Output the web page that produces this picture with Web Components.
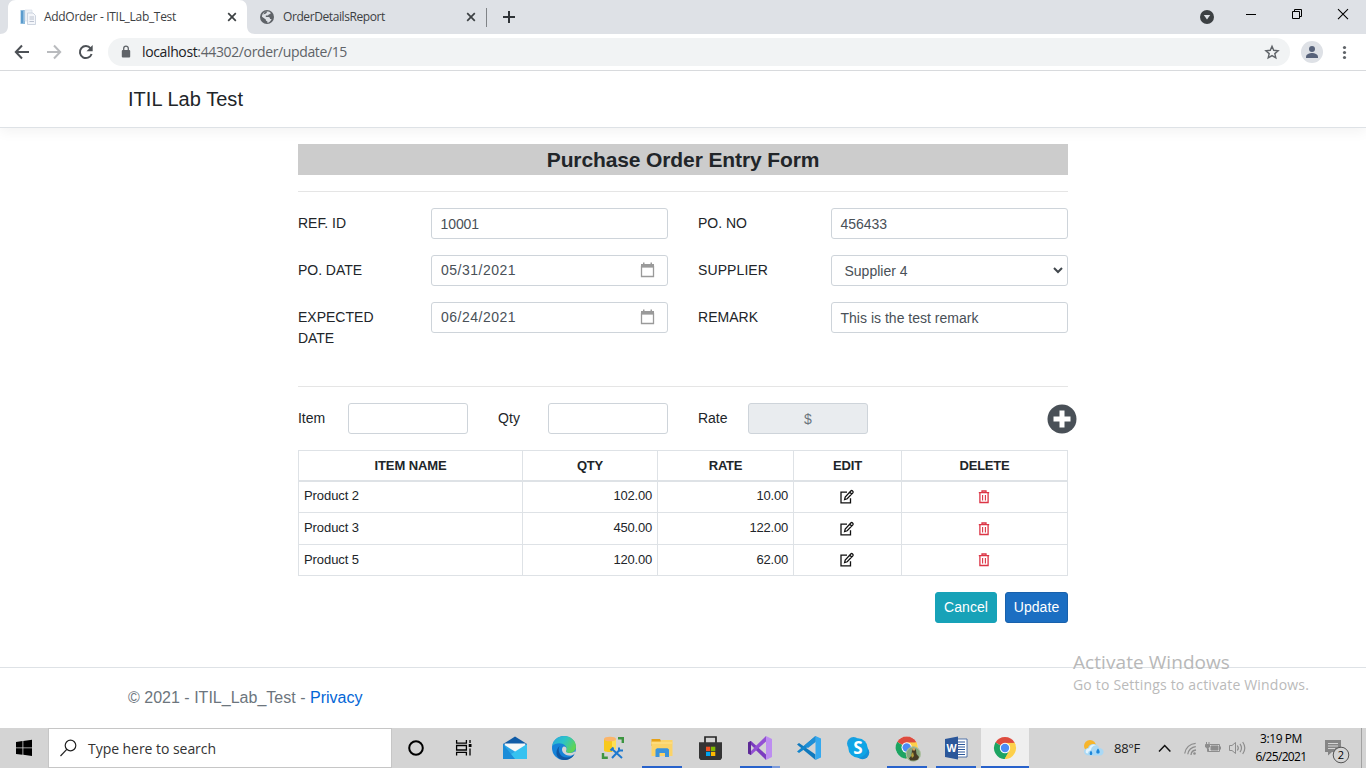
<!DOCTYPE html>
<html lang="en">
<head>
<meta charset="utf-8">
<title>AddOrder - ITIL_Lab_Test</title>
<style>
html,body{margin:0;height:768px;overflow:hidden;background:#fff}
body{font-family:"Liberation Sans",Arial,sans-serif;color:#212529}
</style>
</head>
<body>
<desktop-screen></desktop-screen>
<script>
const SEGOE = '"Open Sans","Noto Sans",sans-serif';

function component(name, build) {
  customElements.define(name, class extends HTMLElement {
    connectedCallback() {
      if (this.shadowRoot) return;
      const root = this.attachShadow({ mode: 'open' });
      const t = document.createElement('template');
      t.innerHTML = build(this);
      root.appendChild(t.content.cloneNode(true));
    }
  });
}

/* ---------- screen ---------- */
component('desktop-screen', () => `
<style>
:host{display:grid;grid-template-rows:71px 657px 40px;width:1366px;height:768px;position:relative}
activate-notice{position:absolute;left:1073px;top:651px}
</style>
<browser-chrome></browser-chrome>
<order-page></order-page>
<task-bar></task-bar>
<activate-notice></activate-notice>`);

/* ---------- browser ---------- */
component('browser-chrome', () => `
<style>
:host{display:block;font:12px/33px ${SEGOE};color:#3c4043}
.strip{height:34px;background:#dee1e6;display:flex;box-sizing:border-box}
browser-tab{flex:none}
.sep{width:1px;height:19px;background:#808387;margin:8px 0 0 0}
.plus{width:14px;height:14px;margin:10px 0 0 15px}
.win{margin-left:auto;display:block}
</style>
<div class="strip">
  <browser-tab active style="width:248px"><svg slot="icon" width="16" height="16" viewBox="0 0 16 16"><rect x="0.500" y="1" width="4.500" height="14" fill="#8dbbdd"/><rect x="1" y="2" width="2" height="12" fill="#5a9bcd"/><path d="M5 1h7v11H5z" fill="#edf1f6" stroke="#d8dee8" stroke-width=".7"/><path d="M7.500 4h5.500l2.500 2.500V15.500h-8z" fill="#f4f6fa" stroke="#c3cbd8" stroke-width=".8"/><path d="M9.500 8h4.500M9.500 10h4.500M9.500 12.500h4.500" stroke="#b4bccb" stroke-width=".9"/></svg><fit-text w="132">AddOrder - ITIL_Lab_Test</fit-text></browser-tab>
  <browser-tab style="width:238px"><svg slot="icon" width="16" height="16" viewBox="0 0 16 16"><circle cx="8" cy="8" r="7" fill="#5f6368"/><path d="M8.200 2.300c1.500.2 2.700.8 3.600 1.700-.2 1-.9 1.300-1.900 1.300-.2.900-.9 1.300-1.700 1.300H6.800v1.500h2.600c1.200 0 1.600.8 1.600 1.800h1.600c-.6 1.900-2.200 3.500-4.300 3.900v-1.600c-1.200 0-1.500-.8-1.500-1.700L3 7.700C3 5 5.300 2.500 8.200 2.300z" fill="#dee1e6"/><path d="M4.200 5.600 7 4.500 8.600 2.200 6 2.500z" fill="#5f6368"/></svg><fit-text w="102">OrderDetailsReport</fit-text></browser-tab>
  <div class="sep"></div>
  <svg class="plus" viewBox="0 0 14 14"><path d="M7 1v12M1 7h12" stroke="#2f3337" stroke-width="2"/></svg>
  <svg class="win" width="166" height="34" viewBox="1200 0 166 34"><circle cx="1207" cy="17" r="7" fill="#3c4043"/><path d="M1203.800 15h6.400l-3.200 4.600z" fill="#dee1e6"/><g fill="none" stroke="#000"><path d="M1246 14.500h10"/><path d="M1292.500 11.500h7v7h-7z M1294.500 11.500v-2h7v7h-2"/><path d="M1338 9.200l10 10M1348 9.200l-10 10" stroke-width="1.100"/></g></svg>
</div>
<tool-bar></tool-bar>`);

component('browser-tab', el => `
<style>
:host{display:flex;height:34px;box-sizing:border-box;padding:0 9px 0 11px;align-items:center;position:relative}
:host([active]){padding:0 10px 0 20px}
.bg{position:absolute;inset:0;z-index:0}
.in{position:relative;display:flex;flex:1;align-items:center;height:34px}
.t{margin-left:8px;height:34px}
.x{margin-left:auto}
</style>
${el.hasAttribute('active') ? '<svg class="bg" width="256" height="34" viewBox="0 0 256 34"><path d="M0 34c5 0 8-3 8-8V8c0-5 3-8 8-8h223c5 0 8 3 8 8v18c0 5 3 8 8 8z" fill="#fff"/></svg>' : ''}
<div class="in"><slot name="icon"></slot><div class="t"><slot></slot></div>
<svg class="x" width="12" height="12" viewBox="0 0 12 12"><path d="M2.200 2.200l7.600 7.600M9.800 2.200L2.200 9.800" stroke="#3c4043" stroke-width="1.700"/></svg></div>`);

component('tool-bar', () => `
<style>
:host{display:flex;height:37px;box-sizing:border-box;border-bottom:1px solid #d8dadd;background:#fff;padding-top:4px}
svg{display:block;flex:none}
.omni{width:1182px;margin-left:0;height:28px;border-radius:14px;background:#f1f3f4;display:flex;color:#5f6368;font:14px/28px ${SEGOE}}
b{font-weight:400;color:#202124}
.lock{margin-left:9px}
.url{margin-left:7px}
.star{margin-left:auto}
</style>
<svg width="108" height="28" viewBox="0 38 108 28" fill="none" stroke="#4d5156" stroke-width="2"><path d="M29 52H16M22 45.500L15.800 52l6.200 6.500"/><path d="M47 52h13M54 45.500l6.200 6.500-6.200 6.500" stroke="#b9bbbe"/><path d="M90.600 48.300A6 6 0 1 0 91.600 54"/><path d="M92.700 45v6.200h-6.200z" fill="#4d5156" stroke="none"/></svg>
<div class="omni">
<svg class="lock" width="18" height="28" viewBox="0 0 18 28"><rect x="4.800" y="12" width="8.400" height="7.500" rx="1" fill="#5f6368"/><path d="M6.700 12.500v-2.100a2.300 2.300 0 0 1 4.600 0v2.100" fill="none" stroke="#5f6368" stroke-width="1.300"/></svg>
<div class="url"><fit-text w="205"><b>localhost</b>:44302/order/update/15</fit-text></div>
<svg class="star" width="36" height="28" viewBox="0 0 36 28"><path d="M18 8.300l1.700 4 4.400.4-3.300 2.900 1 4.300-3.800-2.300-3.800 2.300 1-4.300-3.300-2.900 4.400-.4z" fill="none" stroke="#5f6368" stroke-width="1.400"/></svg>
</div>
<svg width="76" height="28" viewBox="1290 38 76 28"><circle cx="1312" cy="52" r="11" fill="#dee1e6"/><circle cx="1312" cy="49" r="3" fill="#57627a"/><path d="M1306 58v-1.200c0-2.600 3.600-3.800 6-3.800s6 1.200 6 3.800V58z" fill="#57627a"/><g fill="#5f6368"><circle cx="1344.500" cy="47.500" r="1.600"/><circle cx="1344.500" cy="52.500" r="1.600"/><circle cx="1344.500" cy="57.500" r="1.600"/></g></svg>`);

/* ---------- page ---------- */
component('order-page', () => `
<style>
:host{display:flex;flex-direction:column;background:#fff;overflow:hidden}
header{height:57px;box-sizing:border-box;border-bottom:1px solid #dee2e6;box-shadow:0 4px 12px rgba(0,0,0,.05);padding:0 128px;font-size:20px;line-height:57px;flex:none}
main{width:770px;margin:16px auto 0;flex:1}
h1{margin:0 0 16px;height:31px;background:#ccc;text-align:center;font:bold 21px/31px "Liberation Sans",Arial,sans-serif}
hr{border:0;height:1px;background:#e5e5e5;margin:0}
.fields{display:grid;grid-template-columns:133px 237px 163px 237px;grid-template-rows:31px 31px 68px;row-gap:16px;margin:16px 0 0;height:178px}
.fields>:nth-child(4n+3){margin-left:30px}
.add{display:grid;grid-template-columns:50px 120px 80px 120px 80px 120px 1fr;margin-top:16px;height:47px}
.add>:nth-child(3),.add>:nth-child(5){padding-left:30px}
.add svg{justify-self:end;margin:1px -9px 0 0}
.actions{display:flex;justify-content:flex-end;gap:8px;margin-top:16px}
footer{flex:none;height:61px;box-sizing:border-box;border-top:1px solid #dee2e6;padding:0 128px;font-size:16px;line-height:59px;color:#6c757d;white-space:nowrap}
a{color:#0366d6}
</style>
<header><fit-text w="115">ITIL Lab Test</fit-text></header>
<main>
  <h1><fit-text w="272.500">Purchase Order Entry Form</fit-text></h1>
  <hr>
  <div class="fields">
    <form-label><fit-text w="48">REF. ID</fit-text></form-label><form-field><fit-text w="38.500">10001</fit-text></form-field>
    <form-label><fit-text w="49">PO. NO</fit-text></form-label><form-field><fit-text w="46.500">456433</fit-text></form-field>
    <form-label><fit-text w="64">PO. DATE</fit-text></form-label><form-field kind="date"><fit-text w="75">05/31/2021</fit-text></form-field>
    <form-label><fit-text w="70">SUPPLIER</fit-text></form-label><form-field kind="select"><fit-text w="63">Supplier 4</fit-text></form-field>
    <form-label><fit-text w="75.500">EXPECTED</fit-text><br><fit-text w="36">DATE</fit-text></form-label><form-field kind="date"><fit-text w="75">06/24/2021</fit-text></form-field>
    <form-label><fit-text w="60">REMARK</fit-text></form-label><form-field><fit-text w="138">This is the test remark</fit-text></form-field>
  </div>
  <hr>
  <div class="add">
    <form-label><fit-text w="27">Item</fit-text></form-label><form-field></form-field>
    <form-label><fit-text w="22">Qty</fit-text></form-label><form-field></form-field>
    <form-label><fit-text w="29.500">Rate</fit-text></form-label><form-field kind="readonly">$</form-field>
    <svg width="30" height="30" viewBox="0 0 30 30"><circle cx="15" cy="15" r="14.500" fill="#495057"/><path d="M15 6.500v17M6.500 15h17" stroke="#fff" stroke-width="5"/></svg>
  </div>
  <item-table></item-table>
  <div class="actions"><action-button style="width:62px;background:#17a2b8;border-color:#17a2b8"><fit-text w="44">Cancel</fit-text></action-button><action-button style="width:63px;background:#1b6ec2;border-color:#1861ac"><fit-text w="45.500">Update</fit-text></action-button></div>
</main>
<footer><fit-text w="182">© 2021 - ITIL_Lab_Test - </fit-text><a><fit-text w="52.500">Privacy</fit-text></a></footer>`);

component('form-label', () => `
<style>:host{display:block;box-sizing:border-box;padding-top:5px;font-size:14px;line-height:21px;color:#212529;white-space:nowrap}</style><slot></slot>`);

component('form-field', el => {
  const kind = el.getAttribute('kind');
  return `
<style>
:host{display:flex;box-sizing:border-box;height:31px;border:1px solid #ced4da;border-radius:3px;padding:5px 9px 0 8.500px;font-size:14px;line-height:21px;color:#495057;background:#fff;white-space:nowrap}
:host([kind=date]){padding:4px 12px 0 9px}
:host([kind=select]){padding:5px 4px 0 12.500px}
:host([kind=readonly]){background:#e9ecef;justify-content:center;color:#6c757d;padding:5px 0 0}
svg{margin-left:auto}
</style><slot></slot>${
  kind === 'date' ? '<svg width="15" height="21" viewBox="0 0 15 21"><path d="M1.500 6.500h12v10h-12z" fill="none" stroke="#9a9a9a" stroke-width="1.300"/><path d="M1 4h13v3.500H1zM3 2.500h1.500V5H3zM10.500 2.500H12V5h-1.500z" fill="#9a9a9a"/></svg>' :
  kind === 'select' ? '<svg width="10" height="19" viewBox="0 0 10 19"><path d="M1 7l4 4 4-4" fill="none" stroke="#41474d" stroke-width="2"/></svg>' : ''}`;
});

component('action-button', () => `
<style>:host{display:block;box-sizing:border-box;height:31px;border:1px solid;border-radius:3px;padding-top:4px;text-align:center;color:#fff;font-size:14px;line-height:21px}
::slotted(*){color:#fff}</style><slot></slot>`);

const ITEMS = [['Product 2', '102.00', '10.00', 38, 31], ['Product 3', '450.00', '122.00', 38, 38], ['Product 5', '120.00', '62.00', 38, 31]];
const EDIT = '<svg width="16" height="16" viewBox="0 0 16 16" fill="none" stroke="#111" stroke-width="1.300"><path d="M8 3.200H2v10.600h9.500V9.300"/><path d="M5.600 10.600l.6-2.600 5.800-6.300c.9-.7 2.700.7 2 1.900L8.200 9.800zM10.800 3.200l2 1.700"/></svg>';
const TRASH = '<svg width="12" height="14" viewBox="0 0 12 14" fill="none" stroke="#dc3545" stroke-width="1.300"><path d="M.8 2.700h10.400M4 2.400V1h4v1.400M1.900 2.700v9.800h8.200V2.700"/><path d="M4.600 5v5.500M7.400 5v5.500" stroke-width="1.100"/></svg>';

component('item-table', () => `
<style>
:host{display:grid;box-sizing:border-box;grid-template-columns:224px 135px 136px 108px 166px;grid-template-rows:31px 31px 32px 31px;border:1px solid #dee2e6;border-width:1px 0 0 1px;font-size:13px;line-height:20px}
div{box-sizing:border-box;border-right:1px solid #dee2e6;border-bottom:1px solid #dee2e6;padding:5px 5px 0}
.h{font-weight:700;text-align:center;border-bottom-width:2px}
.n{text-align:right}
.r0{padding-top:4px}
.i{padding:7px 5px 0 4px}
.i.r1{padding-top:8px}
.d{padding-top:8px}
.d.r1{padding-top:9px}
svg{display:block;margin:0 auto;position:relative;left:-.5px}
</style>
${[['ITEM NAME', 72], ['QTY', 26], ['RATE', 33.5], ['EDIT', 29], ['DELETE', 50]].map(([t, w]) => `<div class="h"><fit-text w="${w}">${t}</fit-text></div>`).join('')}
${ITEMS.map(([n, q, r, qw, rw], k) => `<div class="r${k}"><fit-text w="55">${n}</fit-text></div><div class="n r${k}"><fit-text w="${qw}.500">${q}</fit-text></div><div class="n r${k}"><fit-text w="${rw}.500">${r}</fit-text></div><div class="i r${k}">${EDIT}</div><div class="i d r${k}">${TRASH}</div>`).join('')}`);

component('activate-notice', () => `
<style>:host{display:block;font-family:${SEGOE};color:#b8b8b8;white-space:nowrap}
.a{font-size:19px;line-height:22px}.b{font-size:14px;line-height:22px;margin-top:1px;color:#bababa}</style>
<div class="a"><fit-text w="157">Activate Windows</fit-text></div>
<div class="b"><fit-text w="236">Go to Settings to activate Windows.</fit-text></div>`);

/* ---------- taskbar ---------- */
const chromeLogo = `<circle cx="25" cy="20" r="11" fill="#fff"/><path d="M25 20 15.470 14.500A11 11 0 0 1 34.530 14.500z" fill="#dd4b3e"/><path d="M25 20 34.530 14.500A11 11 0 0 1 25 31z" fill="#fdd04b"/><path d="M25 20 25 31A11 11 0 0 1 15.470 14.500z" fill="#1da462"/><path d="M25 14.800h9.700l.8 2.200-5.500 1z" fill="#fdd04b"/><path d="M25 14.800h9.700l-.2-.4-9.500-2z" fill="#dd4b3e"/><path d="M29.500 22.600 24.700 31l-1.700-.3 1.500-5.500z" fill="#1da462"/><path d="M20.500 22.600 15.700 14.200l-.7 1.500 3 5z" fill="#1da462"/><path d="M29.500 22.600 24.700 31h1.800l4.500-8z" fill="#fdd04b"/><circle cx="25" cy="20" r="5.200" fill="#fff"/><circle cx="25" cy="20" r="4.200" fill="#4c8bf5"/>`;

const APPS = [
  { art: '<circle cx="24" cy="20" r="6.800" fill="none" stroke="#000" stroke-width="2"/>' },
  { art: '<g fill="none" stroke="#000" stroke-width="1.300"><path d="M15.600 12v3.200h9.800V12M15.600 27.500v-3.200h9.800v3.200M15.600 17.500h9.800v4.500h-9.800zM29 12v3M29 20.500v7"/></g><path d="M27.700 16h2.800v3h-2.800z"/>' },
  { art: '<path d="M13 16 25 8.500 37 16v15H13z" fill="#0f5ba7"/><path d="M14.500 15.500h21L35 19 25 25 15 19z" fill="#f5f7f8"/><path d="M13 16v15h24z" fill="#2aa5e5"/><path d="M37 16v15H13z" fill="#36c2f0"/><path d="M13 16v15h12z" fill="#1b8cd8"/>' },
  { art: '<defs><linearGradient id="e1" x1="0" y1="0" x2="1" y2=".5"><stop offset="0" stop-color="#2ba5dc"/><stop offset=".5" stop-color="#2bc3c9"/><stop offset="1" stop-color="#5fd455"/></linearGradient></defs><circle cx="25" cy="20" r="12" fill="#1683d8"/><path d="M13.200 18C14 12 19 8 25 8c7 0 12 5 12 10.500 0 4-3 6.500-6.500 6.500-2.500 0-4-1-3.500-2 1.500-2 .5-5.500-3-7-4-1.500-8.500-.5-10.800 2z" fill="url(#e1)"/><path d="M20.500 18c-2.500 5 1 12 8 11.500 3-.2 5.500-1.500 7-3.500-2 4-6 6-10.500 6-5 0-8-4-7.500-8 .2-2.500 1.500-4.500 3-6z" fill="#0f57a3"/><path d="M25 18.500c2 0 2.800 1.500 2.500 3-.3 1.200-.8 1.800-.3 2.500.5.700 1.800 1 3.300 1 1.800 0 3.500-.5 5-1.500l1.500.8c-2 3-5 3.700-7.500 3.200-4-.7-6.500-3-6.500-6 0-1.500.8-3 2-3z" fill="#d4d4d4"/>' },
  { art: '<path d="M16 11v11.500c0 2 12 2 12 0V11z" fill="#f8c91c"/><path d="M24 11v12.800c2-.2 4-.6 4-1.300V11z" fill="#ffdf55"/><ellipse cx="22" cy="11" rx="6" ry="2.300" fill="#fbb56a"/><path d="M30 10.200h4.800V15M15 25v4.800h4.800" fill="none" stroke="#3d9540" stroke-width="2.400"/><path d="M24.500 21l8.500 8" stroke="#d4d4d4" stroke-width="3.600"/><path d="M24 21l10 9" stroke="#1c78cf" stroke-width="2"/><path d="M24 30l8-8.500" stroke="#1c78cf" stroke-width="2"/><path d="M31 19.500v3h4M22.500 22.500l3-3" stroke="#1c78cf" stroke-width="2" fill="none"/>' },
  { run: 1, art: '<path d="M14.500 11h8.500l1 2h11v5h-20.500z" fill="#e6a117"/><path d="M14.500 13.500h9l1-1.500H35.500V28h-21z" fill="#fbd368"/><path d="M14.500 14h21v2h-21z" fill="#fddb7c"/><path d="M18.500 29v-7.500l1.500-1.200h10.500l1.500 1.200V29h-4v-4h-5.500v4z" fill="#3a93dc"/>' },
  { art: '<path d="M19 15V9h11v6" fill="none" stroke="#262626" stroke-width="1.700"/><path d="M13 14.300h23V30l-1.500 2h-20L13 30z" fill="#343434"/><path d="M20 18.700h4.300V23H20z" fill="#f25022"/><path d="M25 18.700h4.300V23H25z" fill="#7fba00"/><path d="M20 23.800h4.300V28H20z" fill="#00a4ef"/><path d="M25 23.800h4.300V28H25z" fill="#ffb900"/>' },
  { run: 2, art: '<path d="M13 14.500l3-1.500 15 13.500v5.500z" fill="#7c3bc0"/><path d="M13 25.500l3 1.500L31 13.500V8z" fill="#9350d4"/><path d="M13 14.500l3-1.500v14l-3-1.500z" fill="#5d2a96"/><path d="M16 17v6l3-3z" fill="#d4d4d4"/><path d="M31 14.500v11L24.500 20z" fill="#d4d4d4"/><path d="M31 8l6 3v18l-6 3z" fill="#bd8df0"/>' },
  { art: '<path d="M13 16.500l2-1.500L31.500 26.500V32z" fill="#0f79bd"/><path d="M13 23.500l2 1.500L31.500 13.500V8z" fill="#1285cc"/><path d="M31.500 8l5.500 2.500v19L31.500 32z" fill="#35a9ef"/><path d="M31.500 8v6L24 20l-3.500-2.500z" fill="#1f8fd6"/>' },
  { art: '<circle cx="20.500" cy="15.500" r="6.500" fill="#1a9fe0"/><circle cx="29.500" cy="24.500" r="6.800" fill="#1591d8"/><circle cx="25" cy="20" r="9.700" fill="#0ea5e6"/>', text: 'S' },
  { run: 1, art: `<g transform="translate(-.3 -.5)">${chromeLogo}</g><circle cx="31.300" cy="26" r="7.500" fill="#86a77e"/><circle cx="31.300" cy="26" r="7.100" fill="none" stroke="#b7c7a7" stroke-width=".8"/><path d="M28.500 32.500l-1.500-2 2.500-3 .5-5.500 2-2 2 2 .5 4 2.500 3-1 2.500-3 1z" fill="#463c25"/><path d="M30.500 20h2.500v2.500h-2.500z" fill="#d0a25b"/><path d="M29 27l2-3 1 4-2 2z" fill="#b39d3a"/>` },
  { run: 1, art: '<path d="M24 11h12v18H24z" fill="#fff" stroke="#2b579a" stroke-width=".8"/><path d="M27 14h7M27 16.500h7M27 19h7M27 21.500h7M27 24h7M27 26.500h7" stroke="#2b579a" stroke-width="1.100"/><path d="M14 11l13-2.500v23L14 29z" fill="#2b579a"/>', text: 'W' },
  { run: 3, art: chromeLogo }
];

component('task-app', el => {
  const a = APPS[+el.getAttribute('n')];
  return `
<style>
:host{display:grid;width:49px;height:40px;font-family:${SEGOE};color:#fff;font-weight:700}
svg,.t{grid-area:1/1}
.t{display:grid;place-items:center;height:40px;line-height:40px}
.S{font-size:17px;padding-left:1px}
.W{font-size:10.500px;padding-right:8px}
</style>
<svg width="49" height="40" viewBox="0 0 49 40">${a.run === 3 ? '<path d="M1 0h48v40H1z" fill="#efefef"/>' : ''}${a.art}${a.run === 1 ? '<path d="M5 38h40v2H5z" fill="#2862cb"/>' : a.run === 2 ? '<path d="M5 38h32v2H5z" fill="#2862cb"/><path d="M37 38h8v2h-8z" fill="#7c9bdb"/>' : a.run === 3 ? '<path d="M1 38h48v2H1z" fill="#2862cb"/>' : ''}</svg>
${a.text ? `<span class="t ${a.text}">${a.text}</span>` : ''}`;
});

component('task-bar', () => `
<style>
:host{display:flex;height:40px;background:#d4d4d4;font-family:${SEGOE};color:#1b1b1b;overflow:hidden}
:host>*,svg{flex:none}
svg{display:block}
.start{width:48px}
.search{box-sizing:border-box;width:344px;flex:none;height:40px;background:#fff;border:1px solid #c6c6c6;display:flex;font-size:14px;line-height:39px;color:#333}
.apps{display:flex;width:637px;flex:none}
.tray{flex:1;display:flex}
.temp{width:27px;font-size:13px;line-height:40px;font-weight:500}
.clock{width:52px;text-align:center;font-size:12px;line-height:18px;padding-top:2px;color:#000;margin-left:7px}
.note{position:relative;width:59px;height:40px;margin-left:0}
.note span{position:absolute;left:25px;top:18px;width:18px;height:18px;font-size:11px;line-height:18px;text-align:center;color:#000}
</style>
<svg width="48" height="40" viewBox="0 0 48 40"><path d="M16 14l6.500-.9v6.400H16zM23.300 13l8.700-1.200v7.700h-8.700zM16 20.300h6.500v6.500L16 25.900zM23.300 20.300H32V28l-8.700-1.200z"/></svg>
<div class="search"><svg width="39" height="38" viewBox="-1 0 39 38"><circle cx="20.500" cy="16.500" r="5.300" fill="none" stroke="#222" stroke-width="1.200"/><path d="M17 20.200 10.500 27" stroke="#222" stroke-width="1.200"/></svg><fit-text w="128">Type here to search</fit-text></div>
<div class="apps">${APPS.map((_, i) => `<task-app n="${i}"></task-app>`).join('')}</div>
<div class="tray">
<svg width="85" height="40" viewBox="1029 728 85 40"><circle cx="1090" cy="746" r="6" fill="#f7b52c"/><path d="M1089.500 755.500c-7 0-7-7-1.500-7.500 1-5.500 10-5.500 11 0 6 0 6 7.500 1 7.500z" fill="#a9d8f5"/><path d="M1086 753c-1-3 1-5 3-4.500 1-4 5-5 7-3-3 0-5 2-5 5-2 0-3 1-3 3z" fill="#e3f4fd"/><path d="M1091 750.500c2 2.500 1.500 4.500 0 4.500s-2-2 0-4.500zM1098 748.500c2.500 3 2 5 0 5s-2.500-2 0-5z" fill="#1b86da"/></svg>
<div class="temp"><fit-text w="26">88°F</fit-text></div>
<svg width="107" height="40" viewBox="1141 728 107 40" fill="none" stroke="#8d8d8d"><path d="M1159 751.500l5.700-6 5.700 6" stroke="#111" stroke-width="1.500"/><path d="M1184.700 753.500a11.500 11.500 0 0 1 11-10.200M1187.800 754.300a8.500 8.500 0 0 1 8-7.700M1191 755a5.500 5.500 0 0 1 5-5" stroke-width="1.300"/><circle cx="1194.500" cy="753.500" r="1.300" fill="#8d8d8d" stroke="none"/><path d="M1209.500 744.500h10v7h-11v-3M1220.500 746.500v3"/><path d="M1211 746h7v4h-7zM1205.500 744.500h4v2.500l-2 1.500-2-1.500z" fill="#8d8d8d"/><path d="M1206.500 742v2M1209 742v2M1207.500 748v3.500h2"/><path d="M1229.500 745.500h2.500l3.500-3v11l-3.500-3h-2.500z"/><path d="M1237.300 745.500q2 2.500 0 5M1240 743.800q3 4.200 0 8.400M1242.700 742q4.200 6 0 12" stroke-width="1.200"/></svg>
<div class="clock"><fit-text w="42">3:19 PM</fit-text><br><fit-text w="51">6/25/2021</fit-text></div>
<div class="note"><svg width="59" height="40" viewBox="0 0 59 40"><path d="M18 12h16v12H25l-4 3.500V24h-3z" fill="#858585"/><path d="M21 15.500h10M21 18h10M21 20.500h7" stroke="#d4d4d4"/><circle cx="34" cy="27" r="7.800" fill="#d4d4d4" stroke="#555"/><path d="M54.500 0v40" stroke="#a2a2a2"/></svg><span>2</span></div>
</div>`);

/* Spreads its text over a given width by letter spacing. */
customElements.define('fit-text', class extends HTMLElement {
  connectedCallback() {
    if (this.shadowRoot) return;
    this.attachShadow({ mode: 'open' }).innerHTML = '<style>:host{display:inline-block;white-space:pre;vertical-align:top}</style><slot></slot>';
    const w = parseFloat(this.getAttribute('w'));
    const natural = this.getBoundingClientRect().width;
    const n = this.textContent.length;
    this.style.letterSpacing = ((w - natural) / n).toFixed(3) + 'px';
  }
});
</script>
</body>
</html>
